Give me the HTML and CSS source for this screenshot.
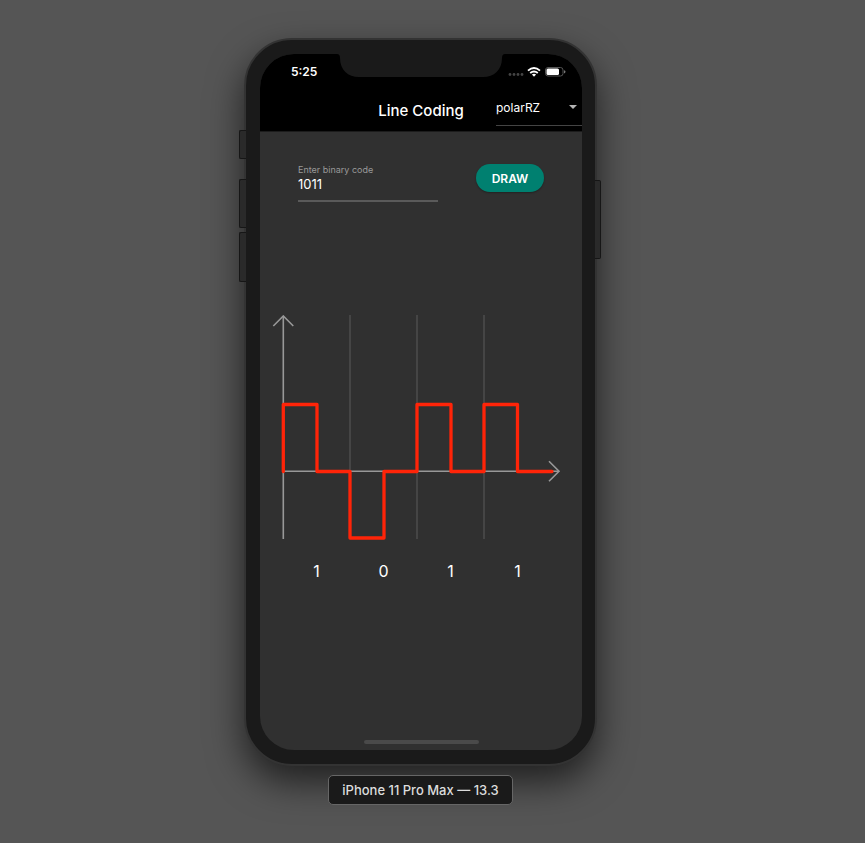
FILE: index.html
```html
<!DOCTYPE html>
<html lang="en">
<head>
<meta charset="utf-8">
<meta name="viewport" content="width=device-width, initial-scale=1">
<title>Line Coding</title>
<link rel="stylesheet" href="styles.css">
</head>
<body>
<div class="phone">
  <span class="side side-mute"></span>
  <span class="side side-up"></span>
  <span class="side side-down"></span>
  <span class="side side-power"></span>
  <div class="screen">
    <svg class="notch" viewBox="0 0 168 23" aria-hidden="true"><path d="M0 0H168Q165 0 165 4C165 16 157 23 146 23H22C11 23 3 16 3 4Q3 0 0 0Z"/></svg>
    <header class="top">
      <div class="status">
        <span class="time">5:25</span>
        <svg class="status-icons" viewBox="0 0 58 12" aria-hidden="true">
          <g fill="#444"><circle cx="2" cy="8.5" r="1.4"/><circle cx="6" cy="8.5" r="1.4"/><circle cx="10" cy="8.5" r="1.4"/><circle cx="14" cy="8.5" r="1.4"/></g>
          <g fill="none" stroke="#fff" stroke-width="1.9"><path d="M20 4.600Q26 -.6 32 4.600"/><path d="M22.200 7Q26 3.800 29.800 7"/></g>
          <path d="M23.900 8.600Q26 7 28.100 8.600L26 10.800Z" fill="#fff"/>
          <rect x="37.5" y="1.5" width="17.500" height="8.500" rx="2.500" fill="none" stroke="#555"/>
          <rect x="38.500" y="2.500" width="12.500" height="6.500" rx="1.500" fill="#fff"/>
          <path d="M56 4.200Q57.500 4.600 57.500 5.800T56 7.400Z" fill="#777"/>
        </svg>
      </div>
      <div class="appbar">
        <h1>Line Coding</h1>
        <div class="picker">
          <select aria-label="Encoding"><option>polarRZ</option></select>
          <svg class="caret" viewBox="0 0 8 4" aria-hidden="true"><path d="M0 0H8L4 4Z"/></svg>
        </div>
      </div>
    </header>
    <main>
      <form class="entry">
        <div class="field">
          <label for="code">Enter binary code</label>
          <input id="code" type="text" value="1011">
        </div>
        <button type="button">DRAW</button>
      </form>
      <svg class="chart" viewBox="0 0 322 226" role="img" aria-label="Polar RZ signal">
        <path class="grid" d="M90 0V224M157 0V224M224 0V224"/>
        <path class="axis" d="M23.300 1V224M23 156.300H299"/>
        <path class="axis" d="M13.300 11L23.300 1L33.300 11M289 146.300L299 156.300L289 166.300"/>
        <path class="signal" d="M23.300 156.500V89.500H57V156.500H90V223H124V156.500H157V89.500H191V156.500H224V89.500H257.500V156.500H292"/>
      </svg>
      <div class="bits"><span>1</span><span>0</span><span>1</span><span>1</span></div>
    </main>
    <div class="home"></div>
  </div>
</div>
<div class="caption">iPhone 11 Pro Max — 13.3</div>
</body>
</html>
```
FILE: styles.css
```css
* { box-sizing: border-box; }
body {
  margin: 0;
  min-height: 100vh;
  padding: 38px 24px 38px 0;
  display: flex;
  flex-direction: column;
  align-items: center;
  background: #555;
  color: #fff;
  font-family: Inter, "Liberation Sans", sans-serif;
}
.phone {
  position: relative;
  width: 100%;
  max-width: 353px;
  padding: 14px 13px 14px 14px;
  border: 2px solid #333;
  border-radius: 48px;
  background: #1a1a1a;
  box-shadow: 0 16px 36px rgba(0, 0, 0, .62);
}
.side {
  position: absolute;
  left: -7px;
  width: 7px;
  background: #2a2a2a;
  border: 1px solid #161616;
  border-right: 0;
  border-radius: 2px 0 0 2px;
}
.side-mute { top: 90px; height: 29px; }
.side-up { top: 139px; height: 49px; }
.side-down { top: 192px; height: 50px; }
.side-power {
  left: auto;
  right: -6px;
  top: 140px;
  width: 6px;
  height: 79px;
  border: 1px solid #161616;
  border-left: 0;
  border-radius: 0 2px 2px 0;
}
.screen {
  position: relative;
  display: flex;
  flex-direction: column;
  min-height: 696px;
  border-radius: 34px;
  overflow: hidden;
  background: #303030;
}
.notch {
  position: absolute;
  top: 0;
  left: 50%;
  width: 168px;
  height: 23px;
  margin-left: -84px;
  fill: #1a1a1a;
}
.top { background: #000; border-bottom: 1px solid #1c1c1c; }
.status {
  display: flex;
  justify-content: space-between;
  align-items: center;
  height: 35px;
  padding: 0 16px 0 31px;
}
.time { font-size: 12px; font-weight: 600; }
.status-icons { width: 58px; height: 12px; }
.appbar {
  display: grid;
  grid-template-columns: 86px 1fr 86px;
  height: 42px;
}
h1 {
  grid-column: 2;
  margin: 0;
  font-size: 15px;
  line-height: 44px;
  font-weight: 500;
  text-align: center;
}
.picker {
  position: relative;
  height: 37px;
  border-bottom: 1px solid #444;
}
select {
  width: 100%;
  height: 36px;
  padding: 0;
  border: 0;
  appearance: none;
  background: transparent;
  color: #fff;
  font: 400 12px Inter, sans-serif;
}
.caret {
  position: absolute;
  right: 5px;
  top: 16px;
  width: 8px;
  height: 4px;
  fill: #b5b5b5;
}
.entry {
  display: flex;
  justify-content: space-between;
  align-items: flex-start;
  padding: 32px 38px 0;
}
.field {
  display: flex;
  flex-direction: column;
  width: 140px;
  height: 38px;
  border-bottom: 2px solid #5a5a5a;
}
label { font-size: 9px; line-height: 12px; color: #999; }
input {
  width: 100%;
  height: 16px;
  padding: 0;
  border: 0;
  background: transparent;
  color: #fff;
  font: 400 13px Inter, sans-serif;
}
button {
  width: 68px;
  height: 28px;
  padding: 0;
  border: 0;
  border-radius: 14px;
  background: #008070;
  color: #fff;
  font: 600 12px Inter, sans-serif;
  box-shadow: 0 1px 2px rgba(0, 0, 0, .3);
}
.chart {
  display: block;
  width: 100%;
  margin-top: 113px;
  fill: none;
}
.grid { stroke: #454545; stroke-width: 2; }
.axis { stroke: #989898; stroke-width: 1.600; }
.signal { stroke: #ff2408; stroke-width: 3.300; stroke-linejoin: round; stroke-linecap: round; }
.bits {
  display: grid;
  grid-template-columns: repeat(4, 1fr);
  padding: 20px 31px 0 23px;
  font-size: 16px;
  line-height: 20px;
  text-align: center;
}
.home {
  width: 115px;
  height: 4px;
  margin: auto auto 6px;
  border-radius: 2px;
  background: #4a4a4a;
}
.caption {
  position: relative;
  margin-top: 9px;
  padding: 0 13px;
  border: 1px solid #666;
  border-radius: 5px;
  background: #1a1a1a;
  color: #ddd;
  font-size: 13px;
  line-height: 28px;
  font-weight: 500;
}
```
